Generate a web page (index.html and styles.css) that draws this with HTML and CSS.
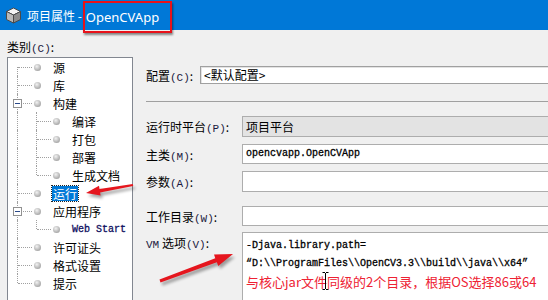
FILE: index.html
```html
<!DOCTYPE html>
<html lang="zh-CN">
<head>
    <meta charset="UTF-8">
    <title>项目属性 - OpenCVApp</title>
    <link rel="stylesheet" href="styles.css">
</head>
<body>
<div class="window">
    <div class="titlebar">
        <svg class="app-icon" width="17" height="17" viewBox="0 0 17 17">
            <polygon points="8.5,1 15.5,4.5 8.5,8 1.5,4.5" fill="#f4f4f4" stroke="#4a4a4a" stroke-width="1"/>
            <polygon points="1.5,4.5 8.5,8 8.5,16 1.5,12.5" fill="#b9b9b9" stroke="#4a4a4a" stroke-width="1"/>
            <polygon points="15.5,4.5 8.5,8 8.5,16 15.5,12.5" fill="#8c8c8c" stroke="#4a4a4a" stroke-width="1"/>
        </svg>
        <span class="title">项目属性 -</span>
        <span class="title mark">OpenCVApp</span>
    </div>

    <div class="dialog">
        <div class="side">
            <div class="side-label">类别<span class="key">(C)</span>:</div>
            <div class="tree">
                <div class="row"><span class="guide elbow first"></span><i class="dot"></i><span class="label">源</span></div>
                <div class="row"><span class="guide elbow"></span><i class="dot"></i><span class="label">库</span></div>
                <div class="row"><span class="guide elbow"><span class="box"></span></span><i class="dot"></i><span class="label">构建</span></div>
                <div class="row"><span class="guide"></span><span class="guide elbow"></span><i class="dot"></i><span class="label">编译</span></div>
                <div class="row"><span class="guide"></span><span class="guide elbow"></span><i class="dot"></i><span class="label">打包</span></div>
                <div class="row"><span class="guide"></span><span class="guide elbow"></span><i class="dot"></i><span class="label">部署</span></div>
                <div class="row"><span class="guide"></span><span class="guide elbow last"></span><i class="dot"></i><span class="label">生成文档</span></div>
                <div class="row"><span class="guide elbow"></span><i class="dot"></i><span class="label sel">运行</span></div>
                <div class="row"><span class="guide elbow"><span class="box"></span></span><i class="dot"></i><span class="label">应用程序</span></div>
                <div class="row"><span class="guide"></span><span class="guide elbow last"></span><i class="dot"></i><span class="label mono">Web Start</span></div>
                <div class="row"><span class="guide elbow"></span><i class="dot"></i><span class="label">许可证头</span></div>
                <div class="row"><span class="guide elbow"></span><i class="dot"></i><span class="label">格式设置</span></div>
                <div class="row"><span class="guide elbow last"></span><i class="dot"></i><span class="label">提示</span></div>
            </div>
        </div>

        <div class="main">
            <div class="field-row config">
                <span class="lbl short">配置<span class="key">(C)</span>:</span>
                <div class="input combo">&lt;默认配置&gt;</div>
            </div>
            <div class="sep"></div>
            <div class="field-row platform">
                <span class="lbl">运行时平台<span class="key">(P)</span>:</span>
                <div class="input disabled">项目平台</div>
            </div>
            <div class="field-row main-class">
                <span class="lbl">主类<span class="key">(M)</span>:</span>
                <div class="input mono">opencvapp.OpenCVApp</div>
            </div>
            <div class="field-row args">
                <span class="lbl">参数<span class="key">(A)</span>:</span>
                <div class="input"></div>
            </div>
            <div class="field-row workdir">
                <span class="lbl">工作目录<span class="key">(W)</span>:</span>
                <div class="input"></div>
            </div>
            <div class="field-row vm">
                <span class="lbl"><span class="key">VM</span> 选项<span class="key">(V)</span>:</span>
                <div class="input area">
                    <div class="mono">-Djava.library.path=</div>
                    <div class="mono">“D:\\ProgramFiles\\OpenCV3.3\\build\\java\\x64”</div>
                    <div class="note">与核心jar文件同级的2个目录，根据OS选择86或64</div>
                </div>
            </div>
        </div>
    </div>

    <!-- annotations drawn over the screenshot -->
    <svg class="notes" width="548" height="300" viewBox="0 0 548 300">
        <defs>
            <filter id="blur"><feGaussianBlur stdDeviation="1.6"/></filter>
        </defs>
        <g transform="translate(2,3)" fill="#000" opacity="0.35" filter="url(#blur)">
            <polygon points="86,193 99,185.7 99.5,188.9 132.8,184 133.2,186 100.1,192.4 100.6,195.6"/>
            <polygon points="233,254 214,254.6 215.3,258.2 159.5,279.6 160.5,282.4 216.9,262.3 218.2,265.9"/>
        </g>
        <g fill="#e5161e">
            <polygon points="86,193 99,185.7 99.5,188.9 132.8,184 133.2,186 100.1,192.4 100.6,195.6"/>
            <polygon points="233,254 214,254.6 215.3,258.2 159.5,279.6 160.5,282.4 216.9,262.3 218.2,265.9"/>
        </g>
        <g stroke="#000" stroke-width="1" fill="none">
            <path d="M325.5 273 V289 M322.5 272.5 H325 M326 272.5 H328.5 M322.5 289.5 H325 M326 289.5 H328.5"/>
        </g>
    </svg>
</div>
</body>
</html>
```

FILE: styles.css
```css
body {
    margin: 0;
    font-family: "Noto Sans CJK SC", "Noto Sans", sans-serif;
    font-size: 12px;
    color: #000;
}
.window {
    position: relative;
    width: 548px;
    height: 300px;
    overflow: hidden;
    background-color: #f0f0f0;
}
.titlebar {
    display: flex;
    align-items: center;
    height: 30px;
    padding-left: 5px;
    background-color: #0078d7;
    color: #fff;
}
.app-icon {
    flex: none;
    margin-right: 5px;
}
.title {
    font-size: 12px;
    white-space: nowrap;
}
.mark {
    position: relative;
    z-index: 2;
    display: inline-block;
    box-sizing: border-box;
    width: 89px;
    height: 32px;
    margin-top: 4px;
    margin-left: 1px;
    padding-left: 1px;
    line-height: 28px;
    font-family: "Noto Sans", sans-serif;
    font-size: 13px;
    border: 2px solid #e8121a;
    box-shadow: 1px 2px 2px rgba(0, 0, 0, 0.45);
}
.dialog {
    display: flex;
}
.side {
    flex: none;
    width: 126px;
    margin-left: 7px;
    padding-top: 8px;
}
.side-label {
    height: 19px;
    line-height: 17px;
}
.key {
    font-family: "Liberation Mono", monospace;
    font-size: 11px;
    color: #1a1a40;
}
.tree {
    box-sizing: border-box;
    height: 260px;
    border: 1px solid #828790;
    background: #fff;
}
.row {
    display: flex;
    align-items: center;
    height: 18px;
}
.guide {
    position: relative;
    flex: none;
    width: 19px;
    height: 18px;
}
.guide::before {
    content: "";
    position: absolute;
    left: 9px;
    top: 0;
    bottom: 0;
    border-left: 1px dotted #a0a0a0;
}
.guide.first::before {
    top: 9px;
}
.guide.last::before {
    bottom: 9px;
}
.guide.elbow::after {
    content: "";
    position: absolute;
    left: 10px;
    top: 9px;
    width: 14px;
    border-top: 1px dotted #a0a0a0;
}
.box {
    position: absolute;
    z-index: 1;
    left: 5px;
    top: 5px;
    box-sizing: border-box;
    width: 9px;
    height: 9px;
    border: 1px solid #919191;
    background: #fff;
}
.box::after {
    content: "";
    position: absolute;
    left: 1px;
    top: 3px;
    width: 5px;
    height: 1px;
    background: #2b4a8a;
}
.dot {
    flex: none;
    width: 7px;
    height: 7px;
    margin-left: 7px;
    border-radius: 50%;
    background: radial-gradient(circle at 40% 35%, #f2f2f2 0, #c4c4c4 45%, #8d8d8d 100%);
}
.label {
    margin-left: 11px;
    padding: 0 1px;
    line-height: 15px;
    white-space: nowrap;
}
.label.sel {
    background: #0078d7;
    color: #fff;
    outline: 1px dotted #222;
}
.mono {
    font-family: "Liberation Mono", monospace;
    font-size: 10px;
    white-space: nowrap;
    -webkit-text-stroke: 0.3px #000;
}
.label.mono {
    color: #101060;
    -webkit-text-stroke: 0.3px #101060;
}
.main {
    flex: 1;
    margin-left: 13px;
    padding-top: 36px;
}
.field-row {
    display: flex;
    align-items: center;
}
.lbl {
    flex: none;
    width: 96px;
    white-space: nowrap;
}
.lbl.short {
    width: 54px;
}
.input {
    flex: 1;
    box-sizing: border-box;
    height: 20px;
    margin-right: -6px;
    padding-left: 3px;
    line-height: 18px;
    border: 1px solid #adadad;
    background: #fff;
    white-space: nowrap;
}
.config .input {
    height: 18px;
    line-height: 16px;
    border-color: #a0a0a0;
    box-shadow: inset 1px 1px 0 #e3e3e3;
}
.sep {
    margin-top: 17px;
    border-top: 1px solid #a0a0a0;
}
.platform {
    margin-top: 14px;
}
.platform .input,
.args .input {
    height: 21px;
    line-height: 19px;
}
.input.disabled {
    background: #e3e3e3;
}
.main-class,
.args {
    margin-top: 7px;
}
.workdir {
    margin-top: 14px;
}
.vm {
    margin-top: 6px;
    align-items: flex-start;
}
.vm .lbl {
    padding-top: 2px;
}
.input.area {
    height: 80px;
    padding-top: 4px;
}
.area div {
    height: 18px;
    line-height: 18px;
}
.note {
    font-size: 13px;
    color: #ee2233;
    white-space: nowrap;
}
.notes {
    position: absolute;
    top: 0;
    left: 0;
    pointer-events: none;
}
```
